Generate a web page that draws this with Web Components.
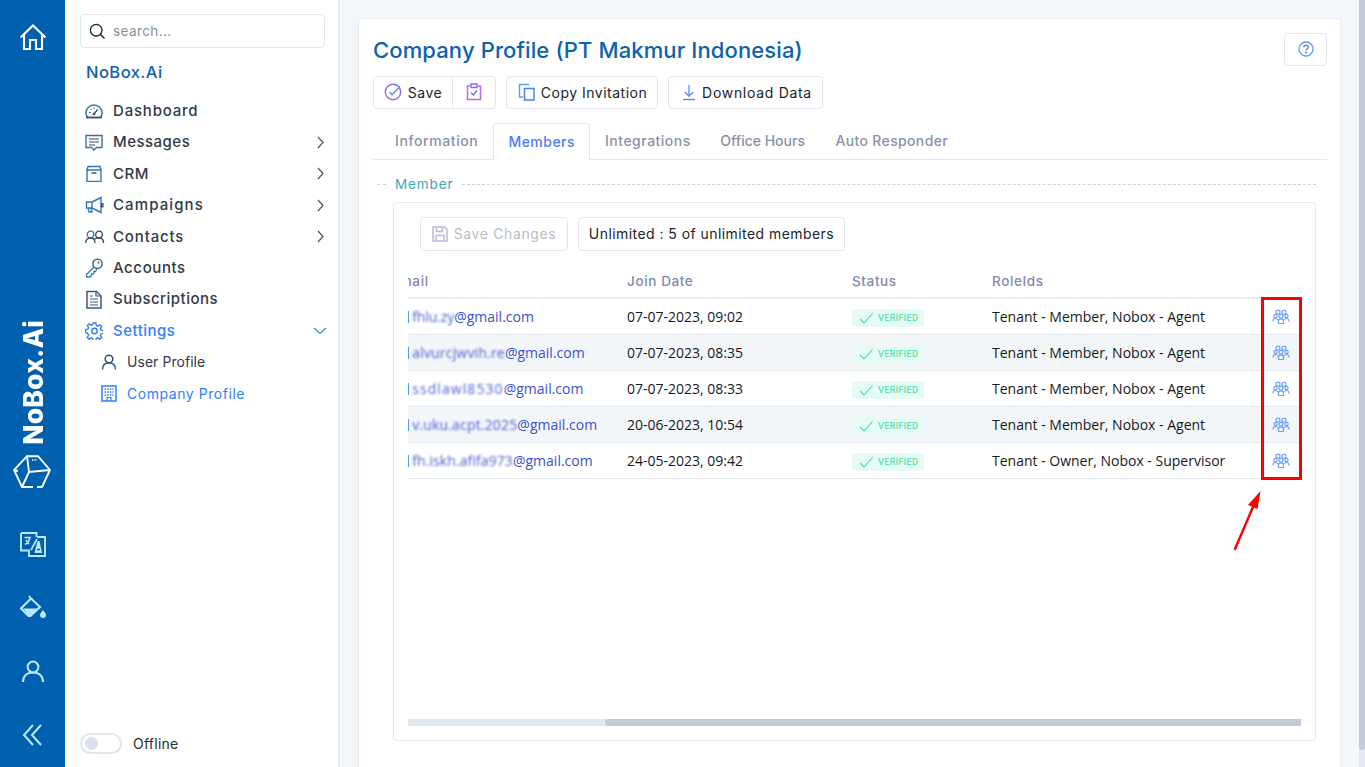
<!DOCTYPE html>
<html><head><meta charset="utf-8"><title>Company Profile</title>
<style>
html,body{margin:0;height:767px;overflow:hidden;background:#f3f7fa}
body{font-family:"Inter","Liberation Sans",sans-serif}
nb-app{width:1365px;height:767px}
</style></head><body>
<nb-app>
  <nb-rail slot="rail"></nb-rail>
  <nb-sidebar slot="side"></nb-sidebar>
  <nb-main slot="main"></nb-main>
</nb-app>
<script>
const P={
home:'<path d="M1.500 14.500 14 2.500l12.500 12M5 11.500V26h6V17h6v9h6V11.500" fill="none" stroke="currentColor" stroke-width="2.100" stroke-linejoin="miter"/>',
search:'<circle cx="7.200" cy="7.200" r="5.800" fill="none" stroke="currentColor" stroke-width="1.300"/><path d="M11.500 11.500 15.500 15.500" stroke="currentColor" stroke-width="1.500"/>',
cube:'<path d="M14 1.200H25L37 15 29 32H24M20 32H9L1 15 14 1.200 16 17 37 15M16 17 9 32M1 15l4 1" fill="none" stroke="currentColor" stroke-width="1.900"/><path d="M19 5h5" stroke="currentColor" stroke-width="1.300" stroke-dasharray="1 .7"/>',
translate:'<path d="M1 1h15.500v4M8 18.500H1V1M17 5h8v19H9v-6.500" fill="none" stroke="currentColor" stroke-width="1.900"/><path d="M4.500 5.500h6.500M9.500 5.500c0 3-1.500 5.500-4.500 7M6 8l3 4" fill="none" stroke="currentColor" stroke-width="1.500"/><path d="M17 7 11 18" stroke="currentColor" stroke-width="1.600"/><path d="M17.500 9 14.500 21H22l-2.500-12z" fill="currentColor"/><path d="M17 17.500h3" stroke="#0060b0" stroke-width="1.500"/>',
paint:'<path d="M9 1 11 3.500M11 3.500 20 12l-9 8.500c-1 1-2 1-3 0L1 13.500Z" fill="none" stroke="currentColor" stroke-width="2"/><path d="M3 13.500h15L11 20c-1 1-1.800 1-2.600.2Z" fill="currentColor"/><path d="M23 15c1.500 2 3 3.500 3 5a3 3 0 0 1-6 0c0-1.500 1.500-3 3-5Z" fill="currentColor"/>',
user:'<circle cx="11" cy="7" r="5.400" fill="none" stroke="currentColor" stroke-width="2"/><path d="M1 22c0-6 4-9.500 10-9.500S21 16 21 22" fill="none" stroke="currentColor" stroke-width="2"/>',
dbl:'<path d="M11 1 2 11l9 10M19 1l-9 10 9 10" fill="none" stroke="currentColor" stroke-width="2"/>',
gauge:'<path d="M2.500 14.500A8 8 0 0 1 1 10a8 8 0 0 1 16 0 8 8 0 0 1-1.500 4.500Z" fill="none" stroke="#2f78b7" stroke-width="1.500"/><path d="M1 14.500h16" stroke="#3c4a5c" stroke-width="1.500"/><path d="M9 11 12.500 6.500" stroke="#3c4a5c" stroke-width="1.300"/><circle cx="9" cy="11" r="1.300" fill="#3c4a5c"/><path d="M4 9.500h1.500M9 4.500V6M5.500 6l1 1" stroke="#3c4a5c" stroke-width="1"/>',
msg:'<path d="M1 1.500h16v12h-5.500L9 16l-2.500-2.500H1Z" fill="none" stroke="#3b6ea5" stroke-width="1.400"/><path d="M4 5h10M4 8h10M4 11h6" stroke="#3c4a5c" stroke-width="1.200"/>',
box:'<path d="M2 5h14v11.500H2ZM3 1.500h12L16 5H2Z" fill="none" stroke="#2f78b7" stroke-width="1.400"/><path d="M6.500 8h5" stroke="#3c4a5c" stroke-width="1.400"/>',
mega:'<path d="M1.500 6h5.500v6H1.500ZM7 6l9-4.500v15L7 12M3 12l1 4h3l-1-4" fill="none" stroke="#2f78b7" stroke-width="1.400"/><path d="M16.500 7v4h1.500V7" fill="none" stroke="#3c4a5c" stroke-width="1.200"/>',
contacts:'<circle cx="5.500" cy="4.500" r="3.300" fill="none" stroke="#2f78b7" stroke-width="1.300"/><circle cx="14" cy="4.500" r="3.300" fill="none" stroke="#3c4a5c" stroke-width="1.300"/><path d="M.8 13c0-3.500 2-5 4.700-5s4.500 1.500 4.500 5M9.600 9c.8-.7 2.600-1 4.400-1 2.700 0 4.600 1.500 4.600 5" fill="none" stroke="#3c4a5c" stroke-width="1.300"/>',
key:'<circle cx="12.500" cy="5.800" r="4.600" fill="none" stroke="#3c4a5c" stroke-width="1.300"/><circle cx="13.500" cy="4.500" r="1" fill="#3c4a5c"/><path d="M9 9 1.500 16.500v2.500H5l1.500-1.500V16H8l1-1v-1.500h1.500L12 10.500" fill="none" stroke="#2f78b7" stroke-width="1.300"/>',
doc:'<path d="M2 1.500h9.500L16 6v12H2Z" fill="none" stroke="#3c5a80" stroke-width="1.500"/><path d="M11 1.500V6h5M5 6h3M5 9h8M5 12h8M5 15h8" fill="none" stroke="#3c5a80" stroke-width="1.200"/>',
gear:'<path d="M7.700 1h2.600l.5 2.400 1.500.7 2-1.300 1.900 1.900-1.300 2 .7 1.500 2.400.5v2.600l-2.400.5-.7 1.500 1.300 2-1.900 1.900-2-1.300-1.500.7-.5 2.400H7.700l-.5-2.400-1.500-.7-2 1.300-1.900-1.900 1.300-2-.7-1.500L0 10.300V7.700l2.400-.5.7-1.500-1.300-2 1.900-1.900 2 1.300 1.500-.7Z" transform="translate(.5 0)" fill="none" stroke="currentColor" stroke-width="1.400"/><circle cx="9.500" cy="9" r="2.700" fill="none" stroke="currentColor" stroke-width="1.400"/>',
person:'<circle cx="8" cy="5" r="3.800" fill="none" stroke="#3c4a5c" stroke-width="1.500"/><path d="M1.500 15.500c0-4 2.500-6.500 6.500-6.500s6.500 2.500 6.500 6.500" fill="none" stroke="#2f5f94" stroke-width="1.500"/>',
bldg:'<path d="M1 1h14v15H1Z" fill="none" stroke="currentColor" stroke-width="1.500"/><path d="M3.500 4h9M3.500 7h9M3.500 10h9" stroke="currentColor" stroke-width="1.600" stroke-dasharray="1.600 1"/><path d="M6 16v-3.500h4V16" fill="none" stroke="currentColor" stroke-width="1.200"/>',
chevR:'<path d="M1 1l5 5.500L1 12" fill="none" stroke="#4a5568" stroke-width="1.200"/>',
chevD:'<path d="M1 1l6 5.500L13 1" fill="none" stroke="currentColor" stroke-width="1.200"/>',
save:'<circle cx="9" cy="9" r="7.700" fill="none" stroke="#8b6cf0" stroke-width="1.400"/><path d="M5.500 9l2.600 2.700L16 3.500" fill="none" stroke="#5d8df6" stroke-width="1.400"/>',
clip:'<path d="M4 3H1.500v13.500h13V3H12" fill="none" stroke="#b06cf5" stroke-width="1.500"/><path d="M5 1h6v3.500H5Z" fill="none" stroke="#8b6cf0" stroke-width="1.400"/><path d="M5 9.500l2.300 2.500L11 7.500" fill="none" stroke="#5d6df0" stroke-width="1.200"/>',
copy:'<path d="M11 1.500H1.500V14H5" fill="none" stroke="#5d9bf6" stroke-width="1.400"/><path d="M6.500 5.500h9.500V17H6.500Z" fill="none" stroke="#4c82e8" stroke-width="1.500"/>',
down:'<path d="M7 1v11M2.800 8 7 12.300 11.200 8" fill="none" stroke="#5d8df6" stroke-width="1.300"/><path d="M1 15.500h12" stroke="#4c82e8" stroke-width="1.300"/>',
floppy:'<path d="M1 1h11.500L15 3.500V15H1Z" fill="none" stroke="#b9bbd8" stroke-width="1.500"/><path d="M4.500 1.500v4h6v-4M4 15V9.500h8V15" fill="none" stroke="#b9bbd8" stroke-width="1.500"/>',
help:'<circle cx="8" cy="8" r="7" fill="none" stroke="#5f9dfa" stroke-width="1.300"/><path d="M5.800 6.300C5.800 5 6.800 4.300 8 4.300s2.200.8 2.200 2c0 1.600-2.200 1.700-2.200 3.200" fill="none" stroke="#5b6df0" stroke-width="1.300"/><circle cx="8" cy="11.500" r=".9" fill="#5b6df0"/>',
check:'<path d="M1 7l4 4 8.500-9.500" fill="none" stroke="currentColor" stroke-width="1.100"/>',
group:'<g fill="none" stroke="#6aa0f8" stroke-width="1.200"><circle cx="6" cy="3.200" r="2"/><circle cx="12" cy="3.200" r="2"/><circle cx="3.500" cy="7" r="1.600"/><circle cx="9" cy="7.200" r="1.900"/><circle cx="14.500" cy="7" r="1.600"/><path d="M1 12.500c0-2 1-3 2.500-3s2 .5 2.500 1.500M12 11c.5-1 1-1.500 2.500-1.500s2.500 1 2.500 3M6.500 14.500V12c0-1.300 1-2.200 2.500-2.200s2.500.9 2.500 2.200v2.500Z"/></g>'
};
class Ico extends HTMLElement{connectedCallback(){if(this.shadowRoot)return;
  const w=this.getAttribute('w'),h=this.getAttribute('h')||w,vb=this.getAttribute('vb')||`0 0 ${w} ${h}`;
  this.attachShadow({mode:'open'}).innerHTML=`<style>:host{display:inline-flex;flex:none}svg{display:block}</style><svg xmlns="http://www.w3.org/2000/svg" width="${w}" height="${h}" viewBox="${vb}">${P[this.getAttribute('n')]}</svg>`;}}
customElements.define('nb-ico',Ico);

customElements.define('nb-app',class extends HTMLElement{constructor(){super();this.attachShadow({mode:'open'}).innerHTML=`
<style>:host{display:grid;grid-template-columns:65px 275px 1fr;height:767px;position:relative}
</style><slot name="rail"></slot><slot name="side"></slot><slot name="main"></slot><nb-annotation></nb-annotation>`}});

customElements.define('nb-annotation',class extends HTMLElement{constructor(){super();this.attachShadow({mode:'open'}).innerHTML=`
<style>:host{position:absolute;left:1261px;top:297px;width:41px;height:260px;pointer-events:none}
.box{box-sizing:border-box;width:41px;height:183px;border:3px solid #f00}
svg{position:absolute;left:-35px;top:188px}</style>
<div class="box"></div>
<svg width="40" height="70" viewBox="0 0 40 70"><path d="M9 64 27 22" stroke="#f00" stroke-width="2.400" stroke-linecap="round"/><path d="M34.500 6 22 20 31.500 24Z" fill="#f00"/></svg>`}});

customElements.define('nb-rail',class extends HTMLElement{constructor(){super();this.attachShadow({mode:'open'}).innerHTML=`
<style>:host{display:flex;flex-direction:column;align-items:center;background:#0060b0;color:#fff;height:767px;box-sizing:border-box}
.home{margin-top:23px}
.brand{margin-top:auto;writing-mode:vertical-rl;transform:rotate(180deg);font:800 26.500px/34px "Inter","Liberation Sans",sans-serif;letter-spacing:.2px;color:#fff;margin-bottom:10px;white-space:nowrap}
.cube{margin-bottom:44px;margin-right:1px}
.lo{color:#bfe7ff;display:flex;flex-direction:column;align-items:center}
.t{margin-bottom:38px}.p{margin-bottom:42px}.u{margin-bottom:41px}.d{margin-bottom:20px}
</style>
<nb-ico class="home" n="home" w="28"></nb-ico>
<div class="brand">NoBox.Ai</div>
<nb-ico class="cube" n="cube" w="38" h="33"></nb-ico>
<div class="lo"><nb-ico class="t" n="translate" w="26" h="25"></nb-ico>
<nb-ico class="p" n="paint" w="26" h="23"></nb-ico>
<nb-ico class="u" n="user" w="22" h="23"></nb-ico>
<nb-ico class="d" n="dbl" w="21" h="23"></nb-ico></div>`}});

customElements.define('nb-nav',class extends HTMLElement{constructor(){super();
 const a=k=>this.getAttribute(k);
 this.attachShadow({mode:'open'}).innerHTML=`
<style>:host{display:flex;align-items:center;height:31.4px;padding-left:5px;color:#333a47;font:500 15px/20px "Inter","Liberation Sans",sans-serif;letter-spacing:.48px;white-space:nowrap}
:host([active]){color:#2f80f6}
:host([sub]){padding-left:21px;font-size:14px;letter-spacing:.2px;font-weight:400}
.i{width:28px;display:flex;align-items:center}
:host([sub]) .i{width:26px}
.s{flex:1}
.c{width:14px;margin-right:-2px;display:flex;justify-content:center}
</style><span class="i"><slot name="i"></slot></span><span class="s"><slot></slot></span>${a('more')!==null?'<span class="c"><nb-ico n="chevR" w="7" h="13"></nb-ico></span>':''}${a('open')!==null?'<span class="c"><nb-ico n="chevD" w="14" h="8"></nb-ico></span>':''}`}});

customElements.define('nb-sidebar',class extends HTMLElement{constructor(){super();this.attachShadow({mode:'open'}).innerHTML=`
<style>:host{display:flex;flex-direction:column;background:#fff;height:767px;box-sizing:border-box;border-right:2px solid #e8ebf1;padding:14px 13px 13px 15px;width:275px}
.search{box-sizing:border-box;height:34px;border:1px solid #e3e5ea;border-radius:4px;display:flex;align-items:center;padding-left:8px;gap:7px;font:400 13.5px "Inter","Liberation Sans",sans-serif;letter-spacing:.4px;color:#8a8e98}
.search span{padding-bottom:1px}
.search nb-ico{color:#1c2230}
.org{margin:14px 0 13.300px 6px;color:#0a62b2;font:500 16.500px/20px "Inter","Liberation Sans",sans-serif;letter-spacing:.45px}
.nav{display:flex;flex-direction:column}
.foot{margin-top:auto;display:flex;align-items:center;gap:11px;font:400 14px "Inter","Liberation Sans",sans-serif;letter-spacing:.25px;color:#262b36}
.tg{box-sizing:border-box;width:42px;height:21px;border:2px solid #e2e5f0;border-radius:11px;padding:2px 3px;display:flex;align-items:center}
.tg i{display:block;width:13px;height:13px;border-radius:50%;background:#dce0ec}
</style>
<div class="search"><nb-ico n="search" w="17"></nb-ico><span>search...</span></div>
<div class="org">NoBox.Ai</div>
<div class="nav">
<nb-nav style="letter-spacing:.8px"><nb-ico slot="i" n="gauge" w="18" h="16"></nb-ico>Dashboard</nb-nav>
<nb-nav more><nb-ico slot="i" n="msg" w="18" h="17"></nb-ico>Messages</nb-nav>
<nb-nav more><nb-ico slot="i" n="box" w="18" h="17"></nb-ico>CRM</nb-nav>
<nb-nav more style="letter-spacing:1.100px"><nb-ico slot="i" n="mega" w="19" h="18"></nb-ico>Campaigns</nb-nav>
<nb-nav more style="letter-spacing:.85px"><nb-ico slot="i" n="contacts" w="20" h="14"></nb-ico>Contacts</nb-nav>
<nb-nav style="letter-spacing:.6px"><nb-ico slot="i" n="key" w="18" h="20"></nb-ico>Accounts</nb-nav>
<nb-nav><nb-ico slot="i" n="doc" w="18" h="19"></nb-ico>Subscriptions</nb-nav>
<nb-nav active open><nb-ico slot="i" n="gear" w="18"></nb-ico>Settings</nb-nav>
<nb-nav sub style="letter-spacing:.05px"><nb-ico slot="i" n="person" w="16"></nb-ico>User Profile</nb-nav>
<nb-nav sub active style="letter-spacing:.55px"><nb-ico slot="i" n="bldg" w="16" h="17"></nb-ico>Company Profile</nb-nav>
</div>
<div class="foot"><span class="tg"><i></i></span><span>Offline</span></div>`}});

customElements.define('nb-btn',class extends HTMLElement{constructor(){super();this.attachShadow({mode:'open'}).innerHTML=`
<style>:host{box-sizing:border-box;display:inline-flex;align-items:center;justify-content:center;gap:6px;height:33px;padding-bottom:1px;border:1px solid #e4e6eb;border-radius:4px;background:#fff;color:#20242c;font:400 14px "Inter","Liberation Sans",sans-serif;letter-spacing:.5px;white-space:nowrap;flex:none}
:host([off]){color:#b9bbc4;height:34px;letter-spacing:.62px}
:host([plain]){letter-spacing:.44px;height:34px}
</style><slot></slot>`}});

customElements.define('member-row',class extends HTMLElement{constructor(){super();
 const a=k=>this.getAttribute(k);
 this.attachShadow({mode:'open'}).innerHTML=`
<style>:host{display:grid;grid-template-columns:219px 225px 140px 280px 29px;height:36px;box-sizing:border-box;border-bottom:1px solid #e6e9ee;align-items:center;font:400 14px "Open Sans","Liberation Sans",sans-serif;color:#15181e;white-space:nowrap}
:host([alt]){background:#f3f6f9}
.c{display:flex;align-items:center}
.m{display:flex;align-items:center;color:#3a50cd;overflow:hidden;font-size:14px}
.bar{width:1.200px;height:12px;background:#4f9cf5;margin-right:3px;flex:none}
.b{filter:blur(.9px);opacity:.9}
.bd{display:inline-flex;align-items:center;gap:5px;height:18px;width:72px;margin-top:2px;box-sizing:border-box;padding-left:7px;border-radius:4px;background:#e6fbf4;color:#3fdcaa;font:500 8.500px "Inter","Liberation Sans",sans-serif;letter-spacing:.35px}
</style>
<span class="m"><i class="bar"></i><span class="b" style="letter-spacing:${a('s')}px">${a('u')}</span><span>${a('d')}</span></span>
<span>${a('j')}</span>
<span class="c"><span class="bd"><nb-ico n="check" w="14" h="12"></nb-ico>VERIFIED</span></span>
<span>${a('r')}</span>
<span class="c"><nb-ico n="group" w="18" h="15"></nb-ico></span>`}});

customElements.define('member-table',class extends HTMLElement{constructor(){super();this.attachShadow({mode:'open'}).innerHTML=`
<style>:host{display:flex;flex-direction:column;flex:1;margin:0 14px}
.h{display:grid;grid-template-columns:219px 225px 140px 1fr;height:32px;align-items:center;border-bottom:2px solid #e9ecf2;font:500 13.500px "Inter","Liberation Sans",sans-serif;letter-spacing:.62px;color:#8089b0}
.clip{overflow:hidden;display:block}
.clip b{font-weight:inherit;margin-left:-17px;display:block}
.rows{flex:1}
.sb{height:7px;background:#e2e6ed;display:flex;margin-bottom:14px;justify-content:flex-end}
.sb i{display:block;width:696px;height:7px;background:#c5cad8;border-radius:3px 0 0 3px}
</style>
<div class="h"><span class="clip"><b>Email</b></span><span>Join Date</span><span>Status</span><span>RoleIds</span></div>
<div class="rows"><slot></slot></div>
<div class="sb"><i></i></div>`}});

customElements.define('nb-main',class extends HTMLElement{constructor(){super();this.attachShadow({mode:'open'}).innerHTML=`
<style>:host{display:flex;height:767px;background:#f3f7fa;overflow:hidden}
.wrap{flex:1;padding:18px 18px 0 18px;min-width:0}
.sbar{width:6px;background:#e6e9f0}
.sbar i{display:block;height:750px;background:#c4ccd6;border-radius:0 0 3px 3px}
.card{background:#fff;border:1px solid #e8ebf1;border-bottom:0;box-sizing:border-box;height:749px;padding:14px 13px 0 14px;display:flex;flex-direction:column;border-radius:3px 3px 0 0}
.top{display:flex;justify-content:space-between;align-items:flex-start}
h1{margin:1px 0 0;font:500 22px/32px "Inter","Liberation Sans",sans-serif;letter-spacing:.12px;color:#0b62ae}
.help{width:43px}
.acts{display:flex;gap:10px;margin-top:10px}
.grp{display:flex}
.tabs{display:flex;margin-top:14px;height:36px;border-bottom:1px solid #e4e6eb;font:500 14px "Inter","Liberation Sans",sans-serif;letter-spacing:.42px;color:#8a90ad}
.tabs span{display:flex;align-items:center;padding:0 15px 1px;height:36px;box-sizing:border-box;white-space:nowrap}
.tabs .a{color:#4a7cf7;border:1px solid #e4e6eb;border-bottom:0;border-radius:4px 4px 0 0;height:37px;background:#fff;padding:0 14px 2px;letter-spacing:.48px}
.leg{display:flex;align-items:center;margin:14px 11px 0 4px;height:20px;color:#3da6b8;font:400 13.500px "Inter","Liberation Sans",sans-serif;letter-spacing:.9px}
.leg i{display:block;border-top:1px dashed #cfd2d8;height:0}
.leg .a{width:9px;margin-right:9px}.leg .b{flex:1;margin-left:8px}
.panel{box-sizing:border-box;margin:8px 11px 0 20px;height:539px;border:1px solid #e6e8ec;border-radius:4px;display:flex;flex-direction:column}
.bar{display:flex;gap:10px;padding:14px 26px 0;margin-bottom:14px}
</style>
<div class="wrap"><div class="card">
 <div class="top"><h1>Company Profile (PT Makmur Indonesia)</h1><nb-btn class="help"><nb-ico n="help" w="16"></nb-ico></nb-btn></div>
 <div class="acts">
  <div class="grp"><nb-btn style="width:80px;border-radius:4px 0 0 4px"><nb-ico n="save" w="18"></nb-ico>Save</nb-btn><nb-btn style="width:44px;margin-left:-1px;border-radius:0 4px 4px 0"><nb-ico n="clip" w="16" h="18"></nb-ico></nb-btn></div>
  <nb-btn style="width:152px;padding-left:1px"><nb-ico n="copy" w="17" h="18"></nb-ico>Copy Invitation</nb-btn>
  <nb-btn style="width:155px;letter-spacing:.7px;padding-left:3px"><nb-ico n="down" w="14" h="17"></nb-ico>Download Data</nb-btn>
 </div>
 <div class="tabs"><span style="padding-left:22px;letter-spacing:.6px">Information</span><span class="a">Members</span><span style="letter-spacing:.5px">Integrations</span><span style="letter-spacing:0;padding-left:14.500px">Office Hours</span><span style="letter-spacing:.35px;padding-left:15.500px">Auto Responder</span></div>
 <div class="leg"><i class="a"></i>Member<i class="b"></i></div>
 <div class="panel">
  <div class="bar"><nb-btn off style="width:148px"><nb-ico n="floppy" w="16"></nb-ico>Save Changes</nb-btn><nb-btn plain style="width:267px">Unlimited : 5 of unlimited members</nb-btn></div>
  <member-table>
   <member-row s="-.1" u="fhlu.zy" d="@gmail.com" j="07-07-2023, 09:02" r="Tenant - Member, Nobox - Agent"></member-row>
   <member-row alt s=".19" u="alvurcjwvih.re" d="@gmail.com" j="07-07-2023, 08:35" r="Tenant - Member, Nobox - Agent"></member-row>
   <member-row s="1.08" u="ssdlawl8530" d="@gmail.com" j="07-07-2023, 08:33" r="Tenant - Member, Nobox - Agent"></member-row>
   <member-row alt s=".17" u="v.uku.acpt.2025" d="@gmail.com" j="20-06-2023, 10:54" r="Tenant - Member, Nobox - Agent"></member-row>
   <member-row s=".09" u="fh.iskh.afifa973" d="@gmail.com" j="24-05-2023, 09:42" r="Tenant - Owner, Nobox - Supervisor"></member-row>
  </member-table>
 </div>
</div></div><div class="sbar"><i></i></div>`}});
</script>
</body></html>
